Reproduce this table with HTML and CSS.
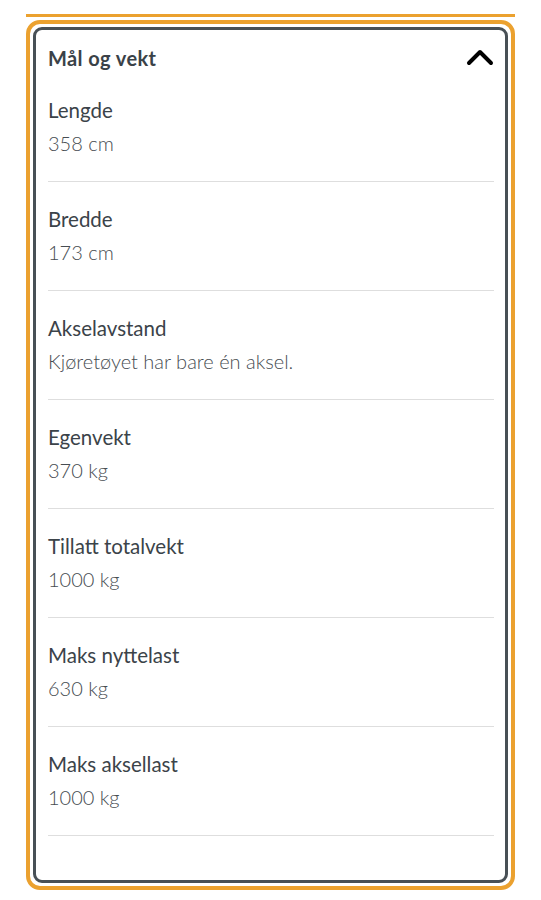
FILE: index.html
```html
<!DOCTYPE html>
<html>
<head>
    <meta charset="UTF-8">
    <title>Mål og vekt</title>
    <link rel="stylesheet" href="styles.css">
</head>
<body>
<div class="page">
    <div class="top-line"></div>
    <div class="card-outer">
        <div class="card">
            <div class="card-header">
                <h2 class="card-title">Mål og vekt</h2>
                <svg class="chevron" width="28" height="18" viewBox="0 0 28 18">
                    <path d="M3 15 L14 4 L25 15" fill="none" stroke="#000" stroke-width="4" stroke-linecap="round" stroke-linejoin="round"/>
                </svg>
            </div>
            <div class="row">
                <div class="row-label">Lengde</div>
                <div class="row-value">358 cm</div>
            </div>
            <div class="row">
                <div class="row-label">Bredde</div>
                <div class="row-value">173 cm</div>
            </div>
            <div class="row">
                <div class="row-label">Akselavstand</div>
                <div class="row-value">Kjøretøyet har bare én aksel.</div>
            </div>
            <div class="row">
                <div class="row-label">Egenvekt</div>
                <div class="row-value">370 kg</div>
            </div>
            <div class="row">
                <div class="row-label">Tillatt totalvekt</div>
                <div class="row-value">1000 kg</div>
            </div>
            <div class="row">
                <div class="row-label">Maks nyttelast</div>
                <div class="row-value">630 kg</div>
            </div>
            <div class="row">
                <div class="row-label">Maks aksellast</div>
                <div class="row-value">1000 kg</div>
            </div>
        </div>
    </div>
</div>
</body>
</html>
```

FILE: styles.css
```css
/* Page */
body {
    margin: 0;
    background-color: #fff;
    font-family: Lato, "Open Sans", sans-serif;
}

.page {
    padding: 14px 26px 0 26px;
}

/* Orange rule above the card */
.top-line {
    height: 3px;
    background-color: #eba12f;
}

/* Focus ring + card */
.card-outer {
    margin-top: 3px;
    border: 4px solid #eba12f;
    border-radius: 14px;
    padding: 3px;
}

.card {
    border: 3px solid #485056;
    border-radius: 9px;
    padding: 0 11px 44px 12px;
}

/* Header */
.card-header {
    display: flex;
    align-items: center;
    justify-content: space-between;
    padding: 16px 0 3px 0;
}

.card-title {
    margin: 0;
    font-size: 20px;
    line-height: 24px;
    font-weight: 700;
    letter-spacing: 0.4px;
    color: #3a4248;
}

.chevron {
    margin-top: -2px;
}

/* Rows */
.row {
    padding: 24px 0 25px 0;
    border-bottom: 1px solid #dedede;
}

.row-label {
    font-size: 20.5px;
    line-height: 26px;
    color: #3b4349;
}

.row-value {
    margin-top: 7px;
    font-size: 20px;
    line-height: 26px;
    font-weight: 300;
    color: #474d52;
}
```
